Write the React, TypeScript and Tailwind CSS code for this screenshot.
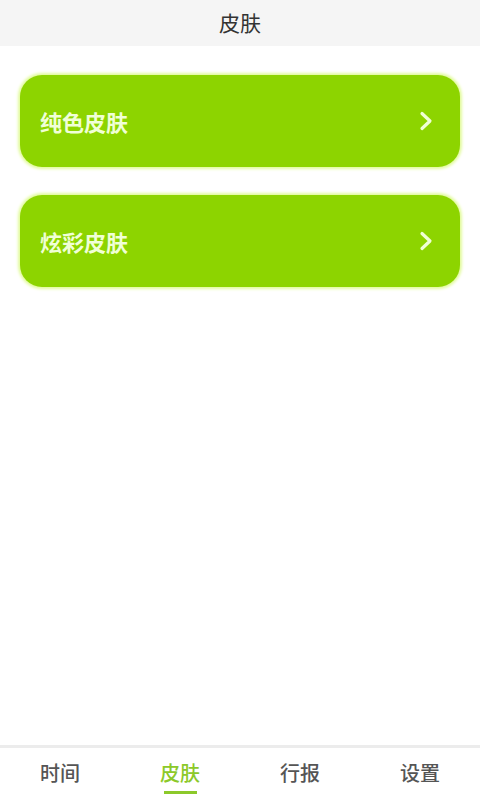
import React from "react";

const font = { fontFamily: '"Noto Sans CJK SC", "Noto Sans", sans-serif' };

function Chevron() {
  return (
    <svg width="16" height="22" viewBox="0 0 16 22" fill="none">
      <path d="M4 3.5 L12 11 L4 18.5" stroke="#f0ffd6" strokeWidth="3.2" strokeLinecap="round" strokeLinejoin="round" />
    </svg>
  );
}

function Card({ label }: { label: string }) {
  return (
    <div className="flex h-[92px] items-center justify-between rounded-[22px] bg-[#8dd400] pl-[20px] pr-[26px] shadow-[0_0_3px_2px_#e2fb9c]">
      <span className="text-[22px] font-bold text-[#f0ffd6]">{label}</span>
      <Chevron />
    </div>
  );
}

export default function App() {
  const tabs = ["时间", "皮肤", "行报", "设置"];
  return (
    <div className="flex h-[800px] w-[480px] flex-col bg-white" style={font}>
      <div className="flex h-[46px] items-center justify-center bg-[#f5f5f5]">
        <span className="text-[21px] text-[#333333]">皮肤</span>
      </div>
      <div className="flex flex-1 flex-col gap-[28px] px-[20px] pt-[29px]">
        <Card label="纯色皮肤" />
        <Card label="炫彩皮肤" />
      </div>
      <div className="grid h-[55px] grid-cols-4 border-t-[3px] border-[#ececec]">
        {tabs.map((t, i) => (
          <div key={t} className="relative flex flex-col items-center pt-[10px]">
            <span className={`text-[20px] font-medium ${i === 1 ? "text-[#8cc92a]" : "text-[#555555]"}`}>{t}</span>
            {i === 1 && <div className="mt-[3px] h-[3px] w-[33px] bg-[#8cc92a]" />}
          </div>
        ))}
      </div>
    </div>
  );
}
